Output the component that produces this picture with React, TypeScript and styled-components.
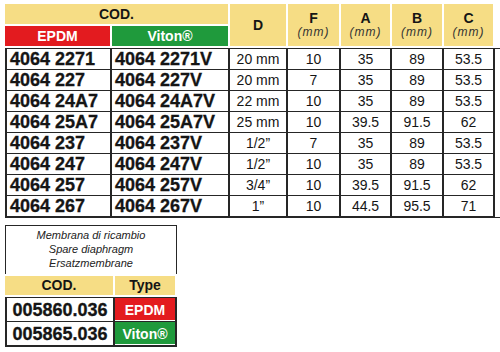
import React from 'react';
import styled, { createGlobalStyle } from 'styled-components';

const Yellow = '#f6dd85';
const Red = '#e31b1f';
const Green = '#1f9a3c';
const Ink = '#151515';
const Line = '#262626';

const COLS = '107px 118px 58px 53px 51px 52px 51px';
const SMALL_COLS = '110px 62px';

const GlobalStyle = createGlobalStyle`
  body {
    margin: 0;
    background: #fff;
    font-family: 'Liberation Sans', Arial, Helvetica, sans-serif;
    color: ${Ink};
  }
`;

const Page = styled.div`
  width: 500px;
  height: 352px;
  padding: 4px 0 0 5px;
  box-sizing: border-box;
`;

const Head = styled.div<{ $cols: string; $rows: string }>`
  display: grid;
  grid-template-columns: ${(p) => p.$cols};
  grid-template-rows: ${(p) => p.$rows};
  row-gap: 2px;
  margin-bottom: 2px;
`;

const HeadCell = styled.div<{ $bg?: string; $span?: number; $rows?: number }>`
  grid-column: span ${(p) => p.$span ?? 1};
  grid-row: span ${(p) => p.$rows ?? 1};
  margin-right: 2px;
  background: ${(p) => p.$bg ?? Yellow};
  color: ${(p) => (p.$bg ? '#fff' : Ink)};
  display: flex;
  flex-direction: column;
  align-items: center;
  justify-content: center;
  font-weight: bold;
  font-size: 14px;
  line-height: 15px;
`;

const Unit = styled.span`
  font-weight: normal;
  font-style: italic;
  font-size: 12px;
  line-height: 13px;
  letter-spacing: 1px;
  color: #333;
`;

const Body = styled.div<{ $cols: string }>`
  display: grid;
  grid-template-columns: ${(p) => p.$cols};
  border-top: 1px solid ${Line};
  border-bottom: 1px solid ${Line};
`;

const Cell = styled.div<{ $code?: boolean; $first?: boolean; $h?: number; $center?: boolean }>`
  height: ${(p) => p.$h ?? 20}px;
  border-right: 2px solid ${Line};
  border-bottom: 1px solid ${Line};
  border-left: ${(p) => (p.$first ? `2px solid ${Line}` : 'none')};
  display: flex;
  align-items: center;
  justify-content: ${(p) => (p.$code && !p.$center ? 'flex-start' : 'center')};
  padding-left: ${(p) => (p.$code && !p.$center ? '3px' : '0')};
  font-size: ${(p) => (p.$code ? '18px' : '14px')};
  font-weight: ${(p) => (p.$code ? 'bold' : 'normal')};
  -webkit-text-stroke: ${(p) => (p.$code ? `0.3px ${Ink}` : '0')};
  line-height: 20px;
  white-space: nowrap;
`;

const TypeCell = styled(Cell)<{ $bg: string }>`
  background: ${(p) => p.$bg};
  color: #fff;
  font-size: 14px;
  font-weight: bold;
  -webkit-text-stroke: 0;
  box-shadow: inset 0 -1px 0 #fff;
`;

const Lower = styled.div`
  width: 172px;
  margin-top: 7px;
`;

const NoteBox = styled.div`
  border: 1.5px solid ${Line};
  border-bottom: none;
  padding: 2px 0 4px;
  font-style: italic;
  font-size: 11px;
  line-height: 14px;
  text-align: center;
  color: #222;
  margin-bottom: 2px;
`;

const rows = [
  ['4064 2271', '4064 2271V', '20 mm', '10', '35', '89', '53.5'],
  ['4064 227', '4064 227V', '20 mm', '7', '35', '89', '53.5'],
  ['4064 24A7', '4064 24A7V', '22 mm', '10', '35', '89', '53.5'],
  ['4064 25A7', '4064 25A7V', '25 mm', '10', '39.5', '91.5', '62'],
  ['4064 237', '4064 237V', '1/2”', '7', '35', '89', '53.5'],
  ['4064 247', '4064 247V', '1/2”', '10', '35', '89', '53.5'],
  ['4064 257', '4064 257V', '3/4”', '10', '39.5', '91.5', '62'],
  ['4064 267', '4064 267V', '1”', '10', '44.5', '95.5', '71'],
];

const spares = [
  { code: '005860.036', type: 'EPDM', bg: Red },
  { code: '005865.036', type: 'Viton®', bg: Green },
];

export default function App() {
  return (
    <Page>
      <GlobalStyle />
      <Head $cols={COLS} $rows="20px 20px">
        <HeadCell $span={2}>COD.</HeadCell>
        <HeadCell $rows={2}>D</HeadCell>
        {['F', 'A', 'B', 'C'].map((l) => (
          <HeadCell key={l} $rows={2}>
            {l}
            <Unit>(mm)</Unit>
          </HeadCell>
        ))}
        <HeadCell $bg={Red}>EPDM</HeadCell>
        <HeadCell $bg={Green}>Viton®</HeadCell>
      </Head>
      <Body $cols={COLS}>
        {rows.map((r) =>
          r.map((v, i) => (
            <Cell key={r[0] + i} $code={i < 2} $first={i === 0}>
              {v}
            </Cell>
          ))
        )}
      </Body>

      <Lower>
        <NoteBox>
          <div>Membrana di ricambio</div>
          <div>Spare diaphragm</div>
          <div>Ersatzmembrane</div>
        </NoteBox>
        <Head $cols={SMALL_COLS} $rows="19px">
          <HeadCell>COD.</HeadCell>
          <HeadCell>Type</HeadCell>
        </Head>
        <Body $cols={SMALL_COLS}>
          {spares.map((s) => (
            <React.Fragment key={s.code}>
              <Cell $code $center $first $h={23}>
                {s.code}
              </Cell>
              <TypeCell $bg={s.bg} $h={23}>
                {s.type}
              </TypeCell>
            </React.Fragment>
          ))}
        </Body>
      </Lower>
    </Page>
  );
}
